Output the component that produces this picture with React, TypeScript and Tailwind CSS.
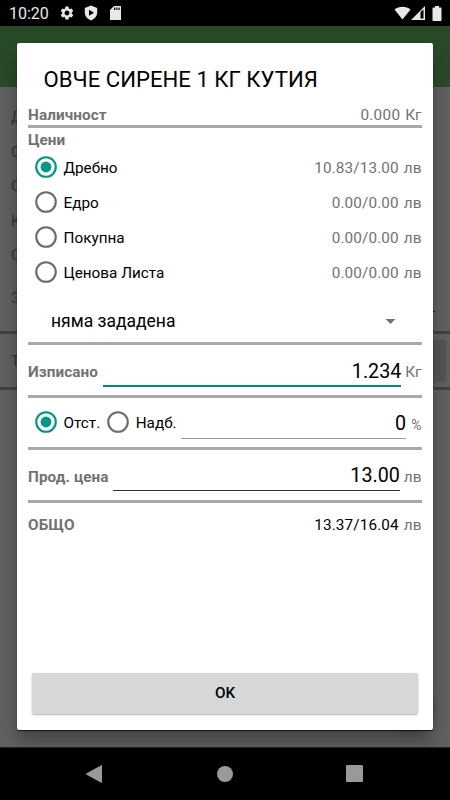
import React, { useState } from "react";
import { MdSettings } from "react-icons/md";

interface PriceOption {
  id: string;
  label: string;
  price: string;
}

const PRICES: PriceOption[] = [
  { id: "retail", label: "Дребно", price: "10.83/13.00" },
  { id: "wholesale", label: "Едро", price: "0.00/0.00" },
  { id: "purchase", label: "Покупна", price: "0.00/0.00" },
  { id: "list", label: "Ценова Листа", price: "0.00/0.00" },
];

const Radio: React.FC<{ checked: boolean }> = ({ checked }) => (
  <svg
    viewBox="0 0 24 24"
    className={
      checked
        ? "mb-px h-[26px] w-[26px] shrink-0 text-[#009688]"
        : "mb-px h-[26px] w-[26px] shrink-0 text-[#6c6c6c]"
    }
  >
    <circle cx="12" cy="12" r="9" fill="none" stroke="currentColor" strokeWidth="2" />
    {checked && <circle cx="12" cy="12" r="5" fill="currentColor" />}
  </svg>
);

const Divider = () => <div className="h-[3px] shrink-0 bg-[#a9a9a9]" />;

const StatusBar = () => (
  <div className="flex h-[26px] shrink-0 items-center bg-black pl-[9px] pr-[8px] text-[#e8e8e8]">
    <span className="w-[50px] pt-[2px] text-[16px] leading-none">10:20</span>
    <MdSettings className="h-4 w-4" />
    <svg viewBox="0 0 14 16" className="ml-[9px] h-4 w-[14px]" fill="currentColor">
      <path
        fillRule="evenodd"
        d="M7 .5 13.2 3v4.6c0 3.5-2.5 6.6-6.2 7.9C3.300 14.200.8 11.100.8 7.600V3L7 .5ZM5 4.700v6L10 7.700 5 4.700Z"
      />
    </svg>
    <svg viewBox="0 0 11 14" className="ml-[12px] h-[14px] w-[11px]" fill="currentColor">
      <path
        fillRule="evenodd"
        d="M4 0h7v14H0V4ZM4 1.500V4h1.300V1.500ZM6.300 1.500V4h1.200V1.500ZM8.500 1.500V4h1.200V1.500Z"
      />
    </svg>
    <div className="grow" />
    <svg viewBox="0 0 17 14" className="h-[14px] w-[17px]" fill="currentColor">
      <path d="M.5 3.500C5-.2 12-.2 16.500 3.500L8.500 13.500Z" />
    </svg>
    <svg viewBox="0 0 14 14" className="h-[14px] w-[14px]" fill="currentColor">
      <path fillRule="evenodd" d="M14 0v14H0ZM9.500 6v6.500h3V3.500Z" />
    </svg>
    <svg viewBox="0 0 10 15" className="ml-[7px] h-[15px] w-[10px]" fill="currentColor">
      <path d="M3 0h4v1.500h1.800q.7 0 .7.7v12q0 .8-.7.8H1.200q-.7 0-.7-.8v-12q0-.7.7-.7H3Z" />
    </svg>
  </div>
);

// The document screen that stays dimmed behind the dialog.
const Backdrop = () => (
  <div className="flex grow flex-col overflow-hidden bg-[#616161] text-[15px] text-[#353535]">
    <div className="h-[61px] shrink-0 bg-[#294a29]" />
    <div className="flex h-[244px] shrink-0 flex-col pl-[11px] pt-[13px] leading-[34.500px]">
      <span>Д</span>
      <span>С</span>
      <span>С</span>
      <span>К</span>
      <span>С</span>
      <div className="mr-[15px] mt-[14px] flex h-[39px] items-start leading-[22px]">
        <span className="w-[60px]">З</span>
        <div className="h-[25px] grow border-b border-[#151515]" />
      </div>
    </div>
    <div className="h-[3px] shrink-0 bg-[#414141]" />
    <div className="flex h-[53px] shrink-0 items-center justify-between pl-[11px] pr-[4px]">
      <span className="pt-[2px]">Т</span>
      <div className="h-[41px] w-20 rounded-xs bg-[#545454] shadow" />
    </div>
    <div className="h-[3px] shrink-0 bg-[#414141]" />
    <div className="flex grow items-end justify-end pb-[20px] pr-[17px]">
      <div className="h-[48px] w-[48px] rounded-full bg-[#555] shadow-[0_4px_7px_rgba(0,0,0,0.3)]" />
    </div>
  </div>
);

const NavBar = () => (
  <div className="flex h-[53px] shrink-0 items-center justify-between border-t border-[#252525] bg-black pb-px pl-[85px] pr-[87px] text-[#999]">
    <svg viewBox="0 0 18 18" className="h-[18px] w-[18px]" fill="currentColor">
      <path d="M16.200.2q.8-.4.8.5v16.600q0 .9-.8.5L1.300 9.500q-.8-.5 0-1Z" />
    </svg>
    <div className="h-4 w-4 rounded-full bg-[#999]" />
    <div className="h-[17px] w-[17px] rounded-[1px] bg-[#999]" />
  </div>
);

const ItemDialog = () => {
  const [priceType, setPriceType] = useState("retail");
  const [adjustment, setAdjustment] = useState("discount");

  return (
    <div className="absolute left-[17px] top-[43px] flex h-[687px] w-[416px] flex-col rounded-[2px] bg-white px-[11px] text-[15.300px] leading-none text-[#727272] shadow-[0_1px_1px_rgba(0,0,0,0.7),0_12px_18px_rgba(0,0,0,0.3)]">
      <div className="flex h-[63px] shrink-0 items-center pl-[15.500px] pt-[9px] text-[22.150px] text-black">
        ОВЧЕ СИРЕНЕ 1 КГ КУТИЯ
      </div>
      <div className="flex h-[19px] shrink-0 items-center justify-between pt-px">
        <span className="font-bold tracking-[0.080px]">Наличност</span>
        <span className="flex gap-[5px] pr-[0.600px]">
          <span className="tracking-[0.300px]">0.000</span>
          <span>Кг</span>
        </span>
      </div>
      <Divider />
      <div className="flex h-[22px] shrink-0 items-center pt-[3px] font-bold">Цени</div>
      {PRICES.map((option) => (
        <div key={option.id} className="flex h-[35px] shrink-0 items-center pr-[0.600px]">
          <button
            className="flex items-center gap-[5px] pl-[4.500px] text-black"
            onClick={() => setPriceType(option.id)}
          >
            <Radio checked={priceType === option.id} />
            <span className="pt-[2px]">{option.label}</span>
          </button>
          <span className="ml-auto pt-[2px] tracking-[0.130px]">{option.price}</span>
          <span className="ml-[5px] pt-[2px]">лв</span>
        </div>
      ))}
      <div className="flex h-[52px] shrink-0 items-center justify-between pl-[23px] pr-[26px] pt-[10px] text-[17.500px] text-black">
        <span className="pt-[2px]">няма зададена</span>
        <svg viewBox="0 0 10 5" className="h-[5px] w-[11px]" fill="#727272">
          <path d="M0 0h10L5 5Z" />
        </svg>
      </div>
      <Divider />
      <div className="flex h-[50px] shrink-0 items-center pr-[0.600px]">
        <span className="pt-[5px] font-bold tracking-[0.080px]">Изписано</span>
        <div className="ml-[5px] flex h-[34px] grow items-center justify-end border-b-2 border-[#00897b] pt-[6px] text-[19.700px] text-black">
          1.234
        </div>
        <span className="ml-[4px] pt-[5px]">Кг</span>
      </div>
      <Divider />
      <div className="flex h-[49px] shrink-0 items-center pr-[0.600px]">
        <button
          className="flex items-center gap-[5px] pl-[4.500px] text-black"
          onClick={() => setAdjustment("discount")}
        >
          <Radio checked={adjustment === "discount"} />
          <span className="pt-[2px]">Отст.</span>
        </button>
        <button
          className="flex items-center gap-[5px] pl-[4.500px] text-black"
          onClick={() => setAdjustment("markup")}
        >
          <Radio checked={adjustment === "markup"} />
          <span className="pt-[2px]">Надб.</span>
        </button>
        <div className="mb-[2px] ml-[4px] flex h-[34px] grow items-center justify-end border-b border-[#999] pt-[5px] text-[19.700px] text-black">
          0
        </div>
        <span className="ml-[5px] pt-[4px] text-[14px]">%</span>
      </div>
      <Divider />
      <div className="flex h-[50px] shrink-0 items-center pr-[0.600px]">
        <span className="pt-[5px] font-bold tracking-[0.080px]">Прод. цена</span>
        <div className="mb-[2px] ml-[4px] flex h-[34px] grow items-center justify-end border-b border-[#303030] pt-[5px] text-[19.700px] text-black">
          13.00
        </div>
        <span className="ml-[4px] pt-[5px]">лв</span>
      </div>
      <Divider />
      <div className="flex h-[44px] shrink-0 items-center justify-between pr-[0.600px] pt-[2px]">
        <span className="font-bold tracking-[0.080px]">ОБЩО</span>
        <span className="flex gap-[5px]">
          <span className="tracking-[0.130px] text-black">13.37/16.04</span>
          <span>лв</span>
        </span>
      </div>
      <button className="mx-[4px] mb-[16px] mt-auto h-[41px] shrink-0 rounded-[2px] bg-[#d6d8d7] text-[15.300px] font-medium text-black shadow-[0_1px_2px_rgba(0,0,0,0.3)]">
        OK
      </button>
    </div>
  );
};

export default function App() {
  return (
    <div className="relative flex h-[800px] w-[450px] flex-col overflow-hidden font-['Roboto',sans-serif]">
      <StatusBar />
      <Backdrop />
      <ItemDialog />
      <NavBar />
    </div>
  );
}
